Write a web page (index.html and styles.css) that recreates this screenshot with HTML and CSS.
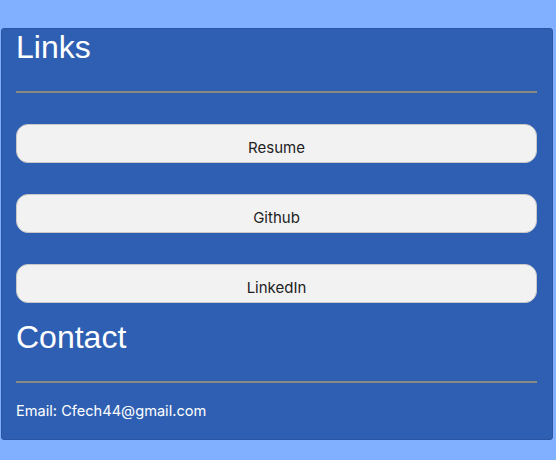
FILE: index.html
```html
<!DOCTYPE html>
<html>
<head>
<meta charset="utf-8">
<link rel="stylesheet" href="styles.css">
</head>
<body>
<main class="panel">
  <h2 class="heading">Links</h2>
  <hr class="rule">
  <div class="links">
    <button class="link-btn">Resume</button>
    <button class="link-btn">Github</button>
    <button class="link-btn">LinkedIn</button>
  </div>
  <h2 class="heading heading-contact">Contact</h2>
  <hr class="rule">
  <p class="email">Email: Cfech44@gmail.com</p>
</main>
</body>
</html>
```
FILE: styles.css
```css
html, body {
  margin: 0;
  padding: 0;
  background: #80b0ff;
  font-family: "Liberation Sans", Arial, sans-serif;
}
.panel {
  box-sizing: border-box;
  margin: 28px 0 0 1px;
  width: 552px;
  background: #2f5fb2;
  border: 1px solid #2a55a3;
  border-radius: 3px;
  padding: 0 15px 18px 14px;
  color: #fff;
}
.heading {
  margin: 0;
  font-size: 32px;
  line-height: 37px;
  font-weight: normal;
}
.heading-contact {
  margin-top: 16px;
}
.rule {
  margin: 25px 0 0;
  border: 0;
  height: 2px;
  background: #8c8a80;
}
.links {
  margin-top: 31px;
  display: flex;
  flex-direction: column;
  gap: 31px;
}
.link-btn {
  height: 39px;
  background: #f2f2f2;
  border: 1px solid #c8c8c8;
  border-radius: 12px;
  font-family: "Inter", "Liberation Sans", sans-serif;
  font-size: 15px;
  color: #222;
  padding: 8px 0 0;
}
.email {
  margin: 19px 0 0;
  font-family: "Inter", "Liberation Sans", sans-serif;
  font-size: 14.6px;
  line-height: 19px;
}
```
